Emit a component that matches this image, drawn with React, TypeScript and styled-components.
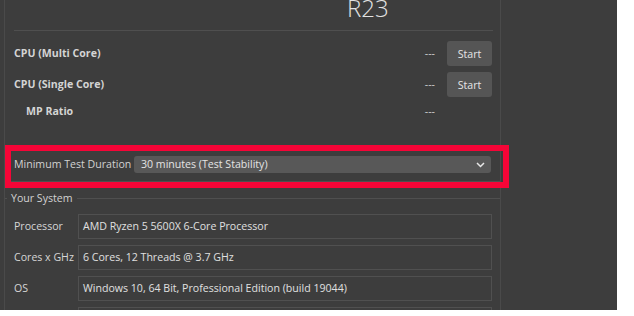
import React from 'react';
import styled, { createGlobalStyle } from 'styled-components';

const GlobalStyle = createGlobalStyle`
    body {
        margin: 0;
        background: #ffffff;
        font-family: 'Open Sans', 'Liberation Sans', sans-serif;
    }
`;

const Window = styled.div`
    position: relative;
    width: 617px;
    height: 310px;
    background-color: #3d3d3d;
    overflow: hidden;
    display: flex;
    color: #d6d6d6;
    font-size: 10.6px;
    line-height: 15px;
`;

const LeftPanel = styled.div`
    width: 497px;
    margin-left: 4px;
    box-sizing: border-box;
    border-left: 1px solid #4a4a4a;
    border-right: 1px solid #4a4a4a;
    display: flex;
    flex-direction: column;
`;

const Header = styled.div`
    display: flex;
    flex-shrink: 0;
    height: 31px;
    box-sizing: border-box;
    margin: 0 7px 0 9px;
    border-bottom: 1px solid #4f4f4f;
    padding-left: 333px;
`;

const Title = styled.div`
    font-weight: 300;
    font-size: 24px;
    line-height: 24px;
    margin-top: -4px;
    color: #e2e2e2;
`;

const Results = styled.div`
    display: grid;
    grid-template-columns: 1fr auto 45px;
    grid-template-rows: 25px 25px 16px;
    column-gap: 12px;
    row-gap: 6px;
    padding: 10px 8px 0 9px;
    align-items: center;
`;

const ResultLabel = styled.div<{ $indent?: boolean }>`
    font-weight: 700;
    padding-left: ${(p) => (p.$indent ? '12px' : '0')};
    color: #d4d4d4;
`;

const Score = styled.div`
    color: #cfcfcf;
`;

const StartButton = styled.button`
    width: 45px;
    height: 25px;
    border: none;
    border-radius: 3px;
    background-color: #555555;
    color: #e6e6e6;
    font-family: inherit;
    font-size: 10.6px;
    padding: 0;
`;

const Spacer = styled.div`
    height: 15px;
`;

const DurationBox = styled.div`
    flex-shrink: 0;
    margin-top: 28px;
    height: 35px;
    box-sizing: border-box;
    border-top: 1px solid #4a4a4a;
    border-bottom: 1px solid #4f4f4f;
    display: flex;
    align-items: center;
    padding: 0 9px 0 9px;
`;

const DurationLabel = styled.div`
    width: 120px;
    flex-shrink: 0;
    white-space: nowrap;
    color: #d2d2d2;
`;

const Combo = styled.div`
    flex: 1;
    height: 17px;
    border-radius: 3px;
    background-color: #585858;
    display: flex;
    align-items: center;
    justify-content: space-between;
    padding: 0 6px 0 7px;
    color: #e4e4e4;
`;

const SystemGroup = styled.fieldset`
    flex-shrink: 0;
    margin: 9px 0 0 0;
    padding: 8px 8px 0 9px;
    border: none;
    border-top: 1px solid #4f4f4f;
    display: grid;
    grid-template-columns: 64px 1fr;
    row-gap: 6px;
    align-items: center;
    min-width: 0;
`;

const Legend = styled.legend`
    margin-left: -7px;
    padding: 0 4px;
    color: #d2d2d2;
    font-size: 10.6px;
    line-height: 15px;
`;

const SysLabel = styled.div`
    color: #d6d6d6;
    white-space: nowrap;
`;

const Field = styled.div`
    height: 25px;
    box-sizing: border-box;
    border: 1px solid #505050;
    display: flex;
    align-items: center;
    padding-left: 4px;
    color: #e0e0e0;
`;

const Highlight = styled.div`
    position: absolute;
    left: 5px;
    top: 145px;
    width: 504px;
    height: 43px;
    box-sizing: border-box;
    border: 6px solid #f50537;
    pointer-events: none;
`;

function Chevron() {
    return (
        <svg width="9" height="6" viewBox="0 0 9 6">
            <polyline points="1,1 4.5,4.5 8,1" fill="none" stroke="#e8e8e8" strokeWidth="1.5" />
        </svg>
    );
}

const system = [
    { label: 'Processor', value: 'AMD Ryzen 5 5600X 6-Core Processor' },
    { label: 'Cores x GHz', value: '6 Cores, 12 Threads @ 3.7 GHz' },
    { label: 'OS', value: 'Windows 10, 64 Bit, Professional Edition (build 19044)' },
    { label: '', value: '' },
];

export default function App() {
    return (
        <>
            <GlobalStyle />
            <Window>
                <LeftPanel>
                    <Header>
                        <Title>R23</Title>
                    </Header>
                    <Results>
                        <ResultLabel>CPU (Multi Core)</ResultLabel>
                        <Score>---</Score>
                        <StartButton>Start</StartButton>
                        <ResultLabel>CPU (Single Core)</ResultLabel>
                        <Score>---</Score>
                        <StartButton>Start</StartButton>
                        <ResultLabel $indent>MP Ratio</ResultLabel>
                        <Score>---</Score>
                        <Spacer />
                    </Results>
                    <DurationBox>
                        <DurationLabel>Minimum Test Duration</DurationLabel>
                        <Combo>
                            <span>30 minutes (Test Stability)</span>
                            <Chevron />
                        </Combo>
                    </DurationBox>
                    <SystemGroup>
                        <Legend>Your System</Legend>
                        {system.map((row, i) => (
                            <React.Fragment key={i}>
                                <SysLabel>{row.label}</SysLabel>
                                <Field>{row.value}</Field>
                            </React.Fragment>
                        ))}
                    </SystemGroup>
                </LeftPanel>
                <Highlight />
            </Window>
        </>
    );
}
